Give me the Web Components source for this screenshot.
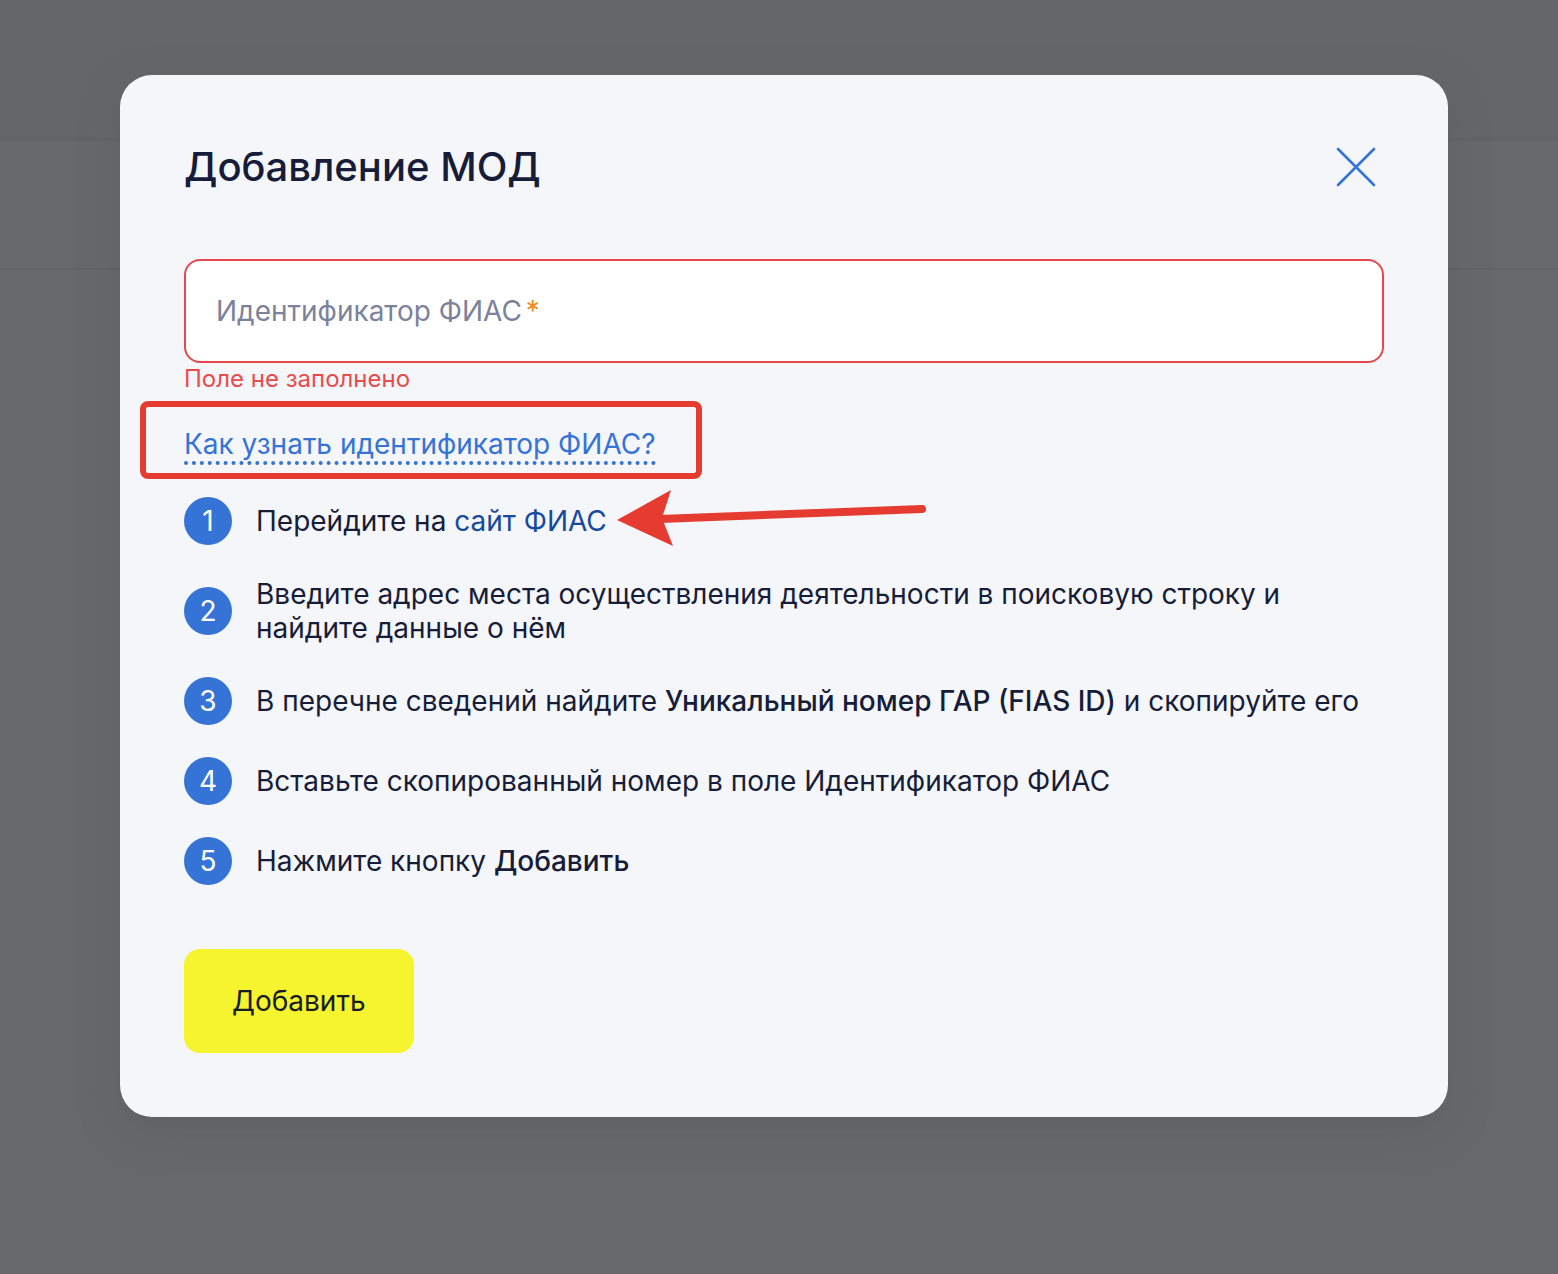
<!DOCTYPE html>
<html lang="ru">
<head>
<meta charset="utf-8">
<title>Добавление МОД</title>
<style>
    body {
        margin: 0;
        font-family: Inter, "Liberation Sans", sans-serif;
        font-size: 28px;
        line-height: 34px;
        color: #171d38;
        background-color: #67686b;
    }
</style>
</head>
<body>
<page-backdrop>
    <modal-dialog heading="Добавление МОД">
        <text-field label="Идентификатор ФИАС" error="Поле не заполнено" required></text-field>
        <hint-toggle>Как узнать идентификатор ФИАС?</hint-toggle>
        <step-list>
            <step-item number="1">Перейдите на <site-link href="#fias">сайт ФИАС</site-link></step-item>
            <step-item number="2">Введите адрес места осуществления деятельности в поисковую строку и найдите данные о нём</step-item>
            <step-item number="3">В перечне сведений найдите <b>Уникальный номер ГАР (FIAS ID)</b> и скопируйте его</step-item>
            <step-item number="4">Вставьте скопированный номер в поле Идентификатор ФИАС</step-item>
            <step-item number="5">Нажмите кнопку <b>Добавить</b></step-item>
        </step-list>
        <submit-button slot="footer">Добавить</submit-button>
    </modal-dialog>
</page-backdrop>

<script>
function makeTemplate(html) {
  const template = document.createElement('template');
  template.innerHTML = html;
  return template;
}

class BaseElement extends HTMLElement {
  constructor() {
    super();
    this.attachShadow({ mode: 'open' });
    this.shadowRoot.appendChild(this.constructor.template.content.cloneNode(true));
  }
}

// dimmed page with the modal laid over it
class PageBackdrop extends BaseElement {
  static template = makeTemplate(`
    <style>
        :host {
            display: grid;
            min-height: 100vh;
        }

        .page, .overlay {
            grid-area: 1 / 1;
        }

        .page-header {
            height: 137px;
            background-color: #656669;
            border-bottom: 4px solid #636467;
        }

        .page-nav {
            height: 127px;
            border-bottom: 2px solid #636467;
        }

        .overlay {
            z-index: 1;
            padding: 75px 110px 75px 120px;
        }
    </style>
    <div class="page">
        <div class="page-header"></div>
        <div class="page-nav"></div>
    </div>
    <div class="overlay"><slot></slot></div>
  `);
}

class ModalDialog extends BaseElement {
  static template = makeTemplate(`
    <style>
        :host {
            display: block;
        }

        .dialog {
            padding: 64px;
            border-radius: 32px;
            background-color: #f4f6fa;
            box-shadow: 0 12px 40px rgba(82, 90, 93, .45);
        }

        .header {
            display: flex;
            justify-content: space-between;
            align-items: center;
            margin-bottom: 64px;
        }

        h1 {
            margin: 0;
            font-size: 40px;
            line-height: 48px;
            font-weight: 500;
        }

        .close-button {
            display: flex;
            justify-content: center;
            align-items: center;
            width: 56px;
            height: 56px;
            padding: 0;
            border: none;
            background: none;
            cursor: pointer;
        }

        .close-button-img {
            width: 40px;
            height: 40px;
            fill: none;
            stroke: #3574d6;
            stroke-width: 2.6;
            stroke-linecap: round;
        }

        .body {
            display: flex;
            flex-direction: column;
            gap: 32px;
        }

        .footer {
            display: flex;
            margin-top: 64px;
        }
    </style>
    <section class="dialog" role="dialog" aria-labelledby="heading">
        <div class="header">
            <h1 id="heading"></h1>
            <button class="close-button" type="button" aria-label="Закрыть">
                <svg class="close-button-img" viewBox="0 0 40 40">
                    <path d="M2 2L38 38M38 2L2 38"/>
                </svg>
            </button>
        </div>
        <div class="body"><slot></slot></div>
        <div class="footer"><slot name="footer"></slot></div>
    </section>
  `);

  connectedCallback() {
    this.shadowRoot.querySelector('h1').textContent = this.getAttribute('heading');
  }
}

class TextField extends BaseElement {
  static template = makeTemplate(`
    <style>
        :host {
            display: block;
        }

        .field {
            position: relative;
        }

        input {
            display: block;
            box-sizing: border-box;
            width: 100%;
            height: 104px;
            padding: 0 30px;
            border: 2px solid #e5484d;
            border-radius: 16px;
            outline: none;
            background-color: #fff;
            font: inherit;
            color: inherit;
        }

        label {
            position: absolute;
            inset: 0 32px;
            display: flex;
            align-items: center;
            gap: 4px;
            color: #7d829c;
            pointer-events: none;
        }

        input:focus + label, input:valid + label {
            display: none;
        }

        .mark {
            color: #f08c1e;
        }

        .error {
            font-size: 24px;
            line-height: 32px;
            color: #e94b4b;
        }
    </style>
    <div class="field">
        <input id="input" type="text" required aria-describedby="error">
        <label for="input"><span class="caption"></span><span class="mark">*</span></label>
    </div>
    <div class="error" id="error"></div>
  `);

  connectedCallback() {
    this.shadowRoot.querySelector('.caption').textContent = this.getAttribute('label');
    this.shadowRoot.querySelector('.error').textContent = this.getAttribute('error');
  }
}

class HintToggle extends BaseElement {
  static template = makeTemplate(`
    <style>
        :host {
            display: flex;
        }

        .wrapper {
            position: relative;
        }

        button {
            display: block;
            padding: 0;
            border: none;
            border-bottom: 4px dotted #3574d6;
            background: none;
            font: inherit;
            color: #3574d6;
            cursor: pointer;
        }

        /* red marker frame around the link */
        .frame {
            position: absolute;
            inset: -26px -46px -14px -44px;
            border: 6px solid #e53b30;
            border-radius: 8px;
            pointer-events: none;
        }
    </style>
    <div class="wrapper">
        <button type="button"><slot></slot></button>
        <div class="frame"></div>
    </div>
  `);
}

class StepList extends BaseElement {
  static template = makeTemplate(`
    <style>
        :host {
            display: flex;
            flex-direction: column;
            gap: 32px;
        }
    </style>
    <slot></slot>
  `);

  connectedCallback() {
    this.setAttribute('role', 'list');
  }
}

class StepItem extends BaseElement {
  static template = makeTemplate(`
    <style>
        :host {
            display: flex;
            align-items: center;
            gap: 24px;
        }

        .number {
            display: flex;
            flex: none;
            justify-content: center;
            align-items: center;
            width: 48px;
            height: 48px;
            border-radius: 100%;
            background-color: #3574d6;
            color: #fff;
        }

        ::slotted(b) {
            font-weight: 500;
        }
    </style>
    <span class="number"></span>
    <div class="text"><slot></slot></div>
  `);

  connectedCallback() {
    this.setAttribute('role', 'listitem');
    this.shadowRoot.querySelector('.number').textContent = this.getAttribute('number');
  }
}

// link with a red arrow pointing at its end
class SiteLink extends BaseElement {
  static template = makeTemplate(`
    <style>
        :host {
            display: inline-block;
            position: relative;
        }

        a {
            color: #164a9e;
            text-decoration: none;
        }

        .arrow {
            position: absolute;
            left: 100%;
            top: -16px;
            width: 324px;
            height: 60px;
            pointer-events: none;
        }
    </style>
    <a><slot></slot></a>
    <svg class="arrow" viewBox="0 0 324 60">
        <path d="M315 21L53 31" fill="none" stroke="#e53b30" stroke-width="8" stroke-linecap="round"/>
        <path d="M10 32L64 2L55 30L66 58Z" fill="#e53b30"/>
    </svg>
  `);

  connectedCallback() {
    this.shadowRoot.querySelector('a').href = this.getAttribute('href');
  }
}

class SubmitButton extends BaseElement {
  static template = makeTemplate(`
    <style>
        :host {
            display: block;
        }

        button {
            height: 104px;
            padding: 0 48px;
            border: none;
            border-radius: 16px;
            background-color: #f6f42e;
            font: inherit;
            color: #171d25;
            cursor: pointer;
        }
    </style>
    <button type="submit"><slot></slot></button>
  `);
}

customElements.define('page-backdrop', PageBackdrop);
customElements.define('modal-dialog', ModalDialog);
customElements.define('text-field', TextField);
customElements.define('hint-toggle', HintToggle);
customElements.define('step-list', StepList);
customElements.define('step-item', StepItem);
customElements.define('site-link', SiteLink);
customElements.define('submit-button', SubmitButton);
</script>
</body>
</html>
